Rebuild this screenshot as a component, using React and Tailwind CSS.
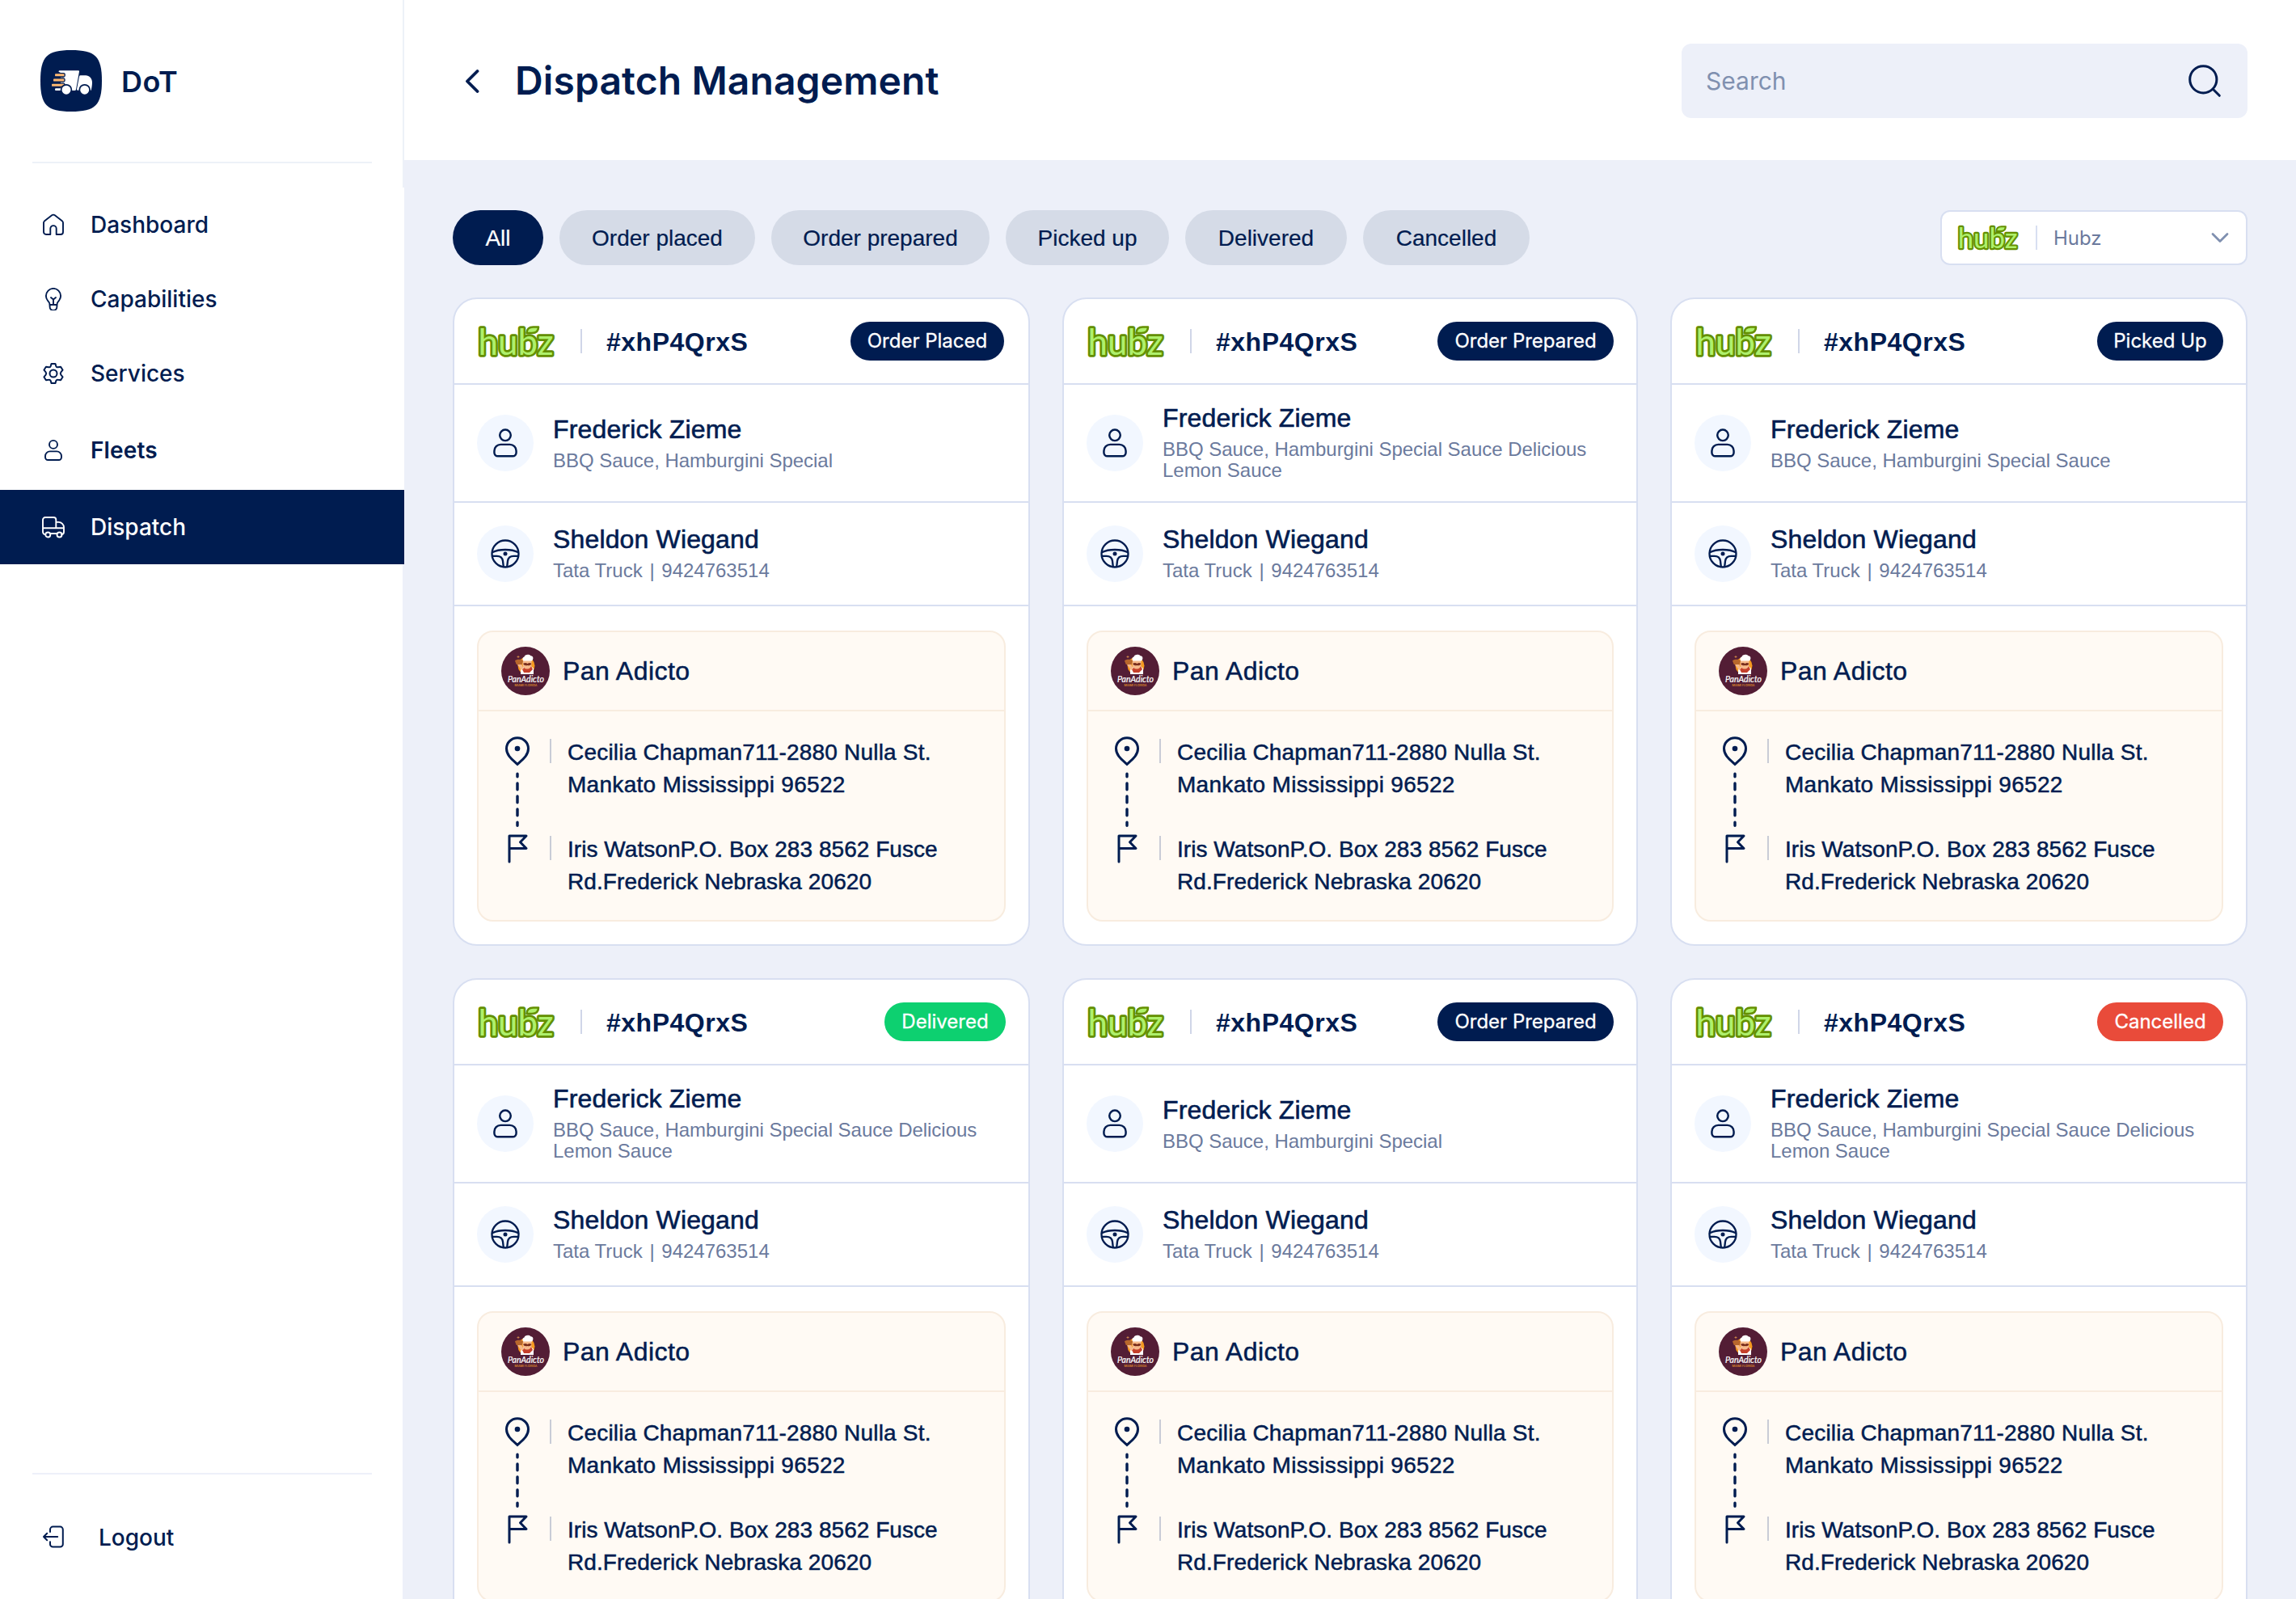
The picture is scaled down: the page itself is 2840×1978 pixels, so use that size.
import React from "react";

const STROKE = { fill: "none", stroke: "currentColor", strokeLinecap: "round", strokeLinejoin: "round" };

function HomeIcon() {
  return (
    <svg viewBox="0 0 28 28" className="size-7 shrink-0" {...STROKE} strokeWidth="1.9">
      <path d="M2 11.6a3 3 0 0 1 1.2-2.4l9-6.9a3 3 0 0 1 3.6 0l9 6.9a3 3 0 0 1 1.2 2.4V23a3 3 0 0 1-3 3h-5.3v-7.2a3.7 3.7 0 0 0-7.4 0V26H5a3 3 0 0 1-3-3Z" />
    </svg>
  );
}

function BulbIcon() {
  return (
    <svg viewBox="0 0 28 28" className="size-7 shrink-0" {...STROKE} strokeWidth="1.9">
      <path d="M9.600 21c0-2.400-1.300-4-2.900-5.700A9.300 9.300 0 0 1 4.900 10a9.100 9.100 0 0 1 18.200 0c0 2-.7 3.800-1.800 5.300-1.600 1.700-2.900 3.300-2.900 5.700v2.600a4.400 4.400 0 0 1-8.800 0Z" />
      <path d="M9.600 21h8.800M14 21v-6.800M11 12l3 2.400 3-2.400" />
    </svg>
  );
}

function GearIcon() {
  return (
    <svg viewBox="0 0 28 28" className="size-7 shrink-0" {...STROKE} strokeWidth="2">
      <circle cx="14" cy="14" r="4.500" />
      <path d="M11.600 1.900h4.800l1 3.200c.4.900 1.200 1.400 2.200 1.200l3.500-.6 2.500 4-2.200 2.600c-.7.900-.7 2.500 0 3.400l2.200 2.600-2.500 4-3.500-.6c-1-.2-1.800.3-2.200 1.200l-1 3.200h-4.800l-1-3.200c-.4-.9-1.200-1.400-2.200-1.200l-3.500.6-2.500-4 2.200-2.600c.7-.9.7-2.500 0-3.400L2.400 9.700l2.500-4 3.500.6c1 .2 1.800-.3 2.200-1.200Z" />
    </svg>
  );
}

function PersonIcon({ className, width }) {
  return (
    <svg viewBox="0 0 28 28" className={className} {...STROKE} strokeWidth={width}>
      <circle cx="14" cy="6.900" r="5" />
      <path d="M9.800 15.400h8.400a5.800 5.800 0 0 1 5.800 5.800v1.600a3.200 3.200 0 0 1-3.200 3.200H7.200A3.200 3.200 0 0 1 4 22.800v-1.600a5.800 5.800 0 0 1 5.800-5.800Z" />
    </svg>
  );
}

function TruckIcon() {
  return (
    <svg viewBox="0 0 28 28" className="size-7 shrink-0" {...STROKE} strokeWidth="1.900">
      <path d="M4 23.100a3 3 0 0 1-3-3V5a3 3 0 0 1 3-3h10.300a3 3 0 0 1 3 3v10.200H1M17.300 7.900h3.200c3.600 0 6.500 2.900 6.500 6.500v5.700a3 3 0 0 1-3 3M17.300 15.200H27M10.500 22h8" />
      <circle cx="7.300" cy="23.500" r="3" />
      <circle cx="21.500" cy="23.500" r="3" />
    </svg>
  );
}

function LogoutIcon() {
  return (
    <svg viewBox="0 0 28 28" className="size-7 shrink-0" {...STROKE} strokeWidth="2">
      <path d="M10 8V5a3.400 3.400 0 0 1 3.400-3.400h9A3.400 3.400 0 0 1 25.800 5v18.200a3.400 3.400 0 0 1-3.400 3.400h-9a3.400 3.400 0 0 1-3.400-3.400v-3M19.200 14H2M6.200 9.800 2 14l4.200 4.200" />
    </svg>
  );
}

function WheelIcon() {
  return (
    <svg viewBox="0 0 36 36" className="size-9" {...STROKE} strokeWidth="2.300">
      <circle cx="18" cy="18" r="16.500" />
      <circle cx="18" cy="18" r="2.500" fill="currentColor" stroke="none" />
      <path d="M2 16.300C7 13.700 12 13 18 13s11 .7 16 3.300" />
      <path d="M2 20.800h5.500c4.700 0 7 2 7.500 6.200l.8 7M34 20.800h-5.500c-4.700 0-7 2-7.500 6.200l-.8 7" />
    </svg>
  );
}

function BrandMark() {
  return (
    <svg viewBox="0 0 76 76" className="size-[76px] shrink-0">
      <path d="M0 38C0 8 8 0 38 0s38 8 38 38-8 38-38 38S0 68 0 38Z" fill="#001c50" />
      <path d="M23.500 25.300h23.500q1.200 0 1 1.200L44 48.700q-.3 1.300-1.500 1.300H25V28l-2.500-1.200q0-1.500 1-1.500Z" fill="#fff" />
      <path d="M49.500 31.300H56c4.500 0 8 4 8 8.500 0 3.500-.5 6.500-1.300 9.900H46q-1.200 0-1-1.400l3-15.600q.3-1.400 1.500-1.400Z" fill="#fff" />
      <path d="M19 47.300h7v2.700h-7q-1 0-1-1.350t1-1.350Z" fill="#fff" />
      <g fill="#ffb870" stroke="#001c50" strokeWidth="1.300">
        <rect x="17.400" y="28.600" width="12.800" height="4.400" rx="1.500" />
        <rect x="15.400" y="34.800" width="14.600" height="4.400" rx="1.500" />
        <rect x="13.400" y="41.100" width="16.600" height="4.400" rx="1.500" />
      </g>
      <g fill="#fff" stroke="#001c50" strokeWidth="1.800">
        <circle cx="32" cy="49.200" r="6.400" />
        <circle cx="54.700" cy="49.200" r="6.400" />
      </g>
    </svg>
  );
}

function HubzLogo({ className }) {
  const word = {
    x: 0.5,
    y: 35.600,
    fontFamily: "Lato, sans-serif",
    fontSize: 44,
    textLength: 93,
    lengthAdjust: "spacingAndGlyphs",
    strokeLinejoin: "round",
    strokeLinecap: "round",
  };
  return (
    <svg viewBox="0 0 95 39" className={"overflow-visible " + className}>
      <text {...word} fill="#648f00" stroke="#648f00" strokeWidth="5.500">hubz</text>
      <path d="M60.500 9c0-5 3-7.500 8-7.500H75c0 5-2.500 7.500-8 7.500Z" fill="#aef06c" stroke="#648f00" strokeWidth="2.600" strokeLinejoin="round" />
      <text {...word} fill="#aef06c">hubz</text>
    </svg>
  );
}

function PanAdictoLogo() {
  return (
    <svg viewBox="0 0 60 60" className="size-[60px] shrink-0">
      <circle cx="30" cy="30" r="30" fill="#531d35" />
      <circle cx="31" cy="23.500" r="10.500" fill="#f79a1f" />
      <path d="M24 34V27l5-3h8l3 3v7Z" fill="#fff" />
      <path d="M29 24h8l2 4-4 4h-7l-2-4Z" fill="#c5402b" />
      <path d="M26.500 16.500h11V22a5.500 5.500 0 0 1-11 0Z" fill="#f6b98b" />
      <path d="M27 21q3-2 5.500 0 2.500-2 5 0-1.500 3-5 2-4 1-5.500-2Z" fill="#7a2f1c" />
      <path d="M27.500 17.500c-2-2-1-4.500 1-5 .5-3 6-3.500 8-1.200 3-.3 4 3.700 1.500 6.200Z" fill="#fff" />
      <path d="M17 17.500c1-2.500 9-2.500 10 0l-1.200 4.500h-7Z" fill="#b8672c" />
      <path d="M20 22h5l3 5-3 2Z" fill="#f6b98b" />
      <path d="M21 14v-3M19.500 12.500h3" stroke="#d88d4a" strokeWidth="0.800" />
      <text x="8" y="44" fontFamily="Lato, sans-serif" fontStyle="italic" fontWeight="400" fontSize="10.500" textLength="45" lengthAdjust="spacingAndGlyphs" fill="#fff" stroke="#fff" strokeWidth="0.200">PanAdicto</text>
      <text x="16.500" y="49" fontFamily="Inter, sans-serif" fontWeight="600" fontSize="3.200" textLength="28" lengthAdjust="spacingAndGlyphs" fill="#d9862d">MIAMI FLORIDA</text>
    </svg>
  );
}

function RouteLine() {
  return (
    <svg viewBox="0 0 40 170" className="-mt-[5px] h-[170px] w-10 shrink-0" {...STROKE} strokeWidth="3">
      <path d="M20 40.500C15.500 36 6.500 30.500 6.500 21a13.500 13.300 0 0 1 27 0c0 9.500-9 15-13.500 19.500Z" strokeLinejoin="miter" />
      <circle cx="20" cy="21" r="3.300" fill="currentColor" stroke="none" />
      <path d="M20 52.200v3.500M20 64v7.800M20 80v7.800M20 96v7.800M20 112.200v4" strokeWidth="3.400" />
      <path d="M10 161V129h21l-7.500 7.800 7.500 7.700H10" />
    </svg>
  );
}

const NAV = [
  { label: "Dashboard", icon: <HomeIcon />, style: "h-[92px] font-medium" },
  { label: "Capabilities", icon: <BulbIcon />, style: "h-[92px] font-medium" },
  { label: "Services", icon: <GearIcon />, style: "h-[92px] font-medium" },
  { label: "Fleets", icon: <PersonIcon className="size-7 shrink-0" width="1.900" />, style: "h-[98px] font-semibold tracking-[0.15px]" },
  { label: "Dispatch", icon: <TruckIcon />, style: "h-[92px] bg-[#001c50] font-medium text-white" },
];

function Sidebar() {
  return (
    <aside className="flex h-[1978px] w-[500px] shrink-0 flex-col bg-[#edf0f9]">
      <div className="flex h-[232px] flex-col border-r-2 border-[#edf1f8] bg-white">
        <div className="mr-[38px] ml-10 flex h-[202px] items-center gap-6 border-b-2 border-[#edf1f8] pl-[10px]">
          <BrandMark />
          <span className="pt-0.5 text-[36px] leading-none font-semibold tracking-[0.4px]">DoT</span>
        </div>
      </div>
      <nav className="bg-white">
        {NAV.map((item) => (
          <a key={item.label} className={"flex items-center gap-8 pl-[52px] text-[28px] " + item.style}>
            {item.icon}
            {item.label}
          </a>
        ))}
      </nav>
      <div className="flex w-[498px] flex-1 flex-col justify-end bg-white">
        <div className="mr-[38px] ml-10 flex h-[156px] items-center gap-[42px] border-t-2 border-[#edf0f9] pl-3 text-[28px] font-medium">
          <LogoutIcon />
          <span className="pt-0.5">Logout</span>
        </div>
      </div>
    </aside>
  );
}

function Header() {
  return (
    <header className="flex h-[198px] items-center justify-between bg-white pt-0.5 pr-[60px] pl-[74px]">
      <div className="flex items-center">
        <svg viewBox="0 0 20 30" className="h-[30px] w-5" {...STROKE} strokeWidth="3.800">
          <path d="M16.500 3 4 15.500 16.500 28" />
        </svg>
        <h1 className="ml-[43px] text-[48px] leading-none font-semibold tracking-[0.1px]">Dispatch Management</h1>
      </div>
      <div className="flex h-[92px] w-[700px] items-center justify-between rounded-xl bg-[#edf0f9] pr-[32px] pl-[30px]">
        <span className="text-[30px] text-[#8090b0]">Search</span>
        <svg viewBox="0 0 42 42" className="size-[42px]" {...STROKE} strokeWidth="3">
          <circle cx="19.300" cy="19.300" r="16.600" />
          <path d="m31.300 31.300 8 8" />
        </svg>
      </div>
    </header>
  );
}

const TABS = [
  { label: "All", style: "w-[112px] bg-[#001c50] text-white" },
  { label: "Order placed", style: "w-[242px] bg-[#d5dbe7]" },
  { label: "Order prepared", style: "w-[270px] bg-[#d5dbe7]" },
  { label: "Picked up", style: "w-[202px] bg-[#d5dbe7]" },
  { label: "Delivered", style: "w-[200px] bg-[#d5dbe7]" },
  { label: "Cancelled", style: "w-[206px] bg-[#d5dbe7]" },
];

function Filters() {
  return (
    <div className="flex items-center justify-between">
      <div className="flex gap-5 font-['Liberation_Sans',sans-serif] text-[28px]">
        {TABS.map((tab) => (
          <button key={tab.label} className={"h-[68px] rounded-full pt-0.5 whitespace-nowrap [-webkit-text-stroke:0.2px] " + tab.style}>
            {tab.label}
          </button>
        ))}
      </div>
      <div className="flex h-[68px] w-[380px] items-center rounded-xl border-2 border-[#d8dff1] bg-white pr-[21px] pl-[19px]">
        <HubzLogo className="h-[31px] w-[76px]" />
        <div className="ml-[21px] h-[30px] w-0.5 bg-[#d8dff1]" />
        <span className="ml-5 flex-1 pt-0.5 text-[24px] text-[#6b7a9d]">Hubz</span>
        <svg viewBox="0 0 22 14" className="h-[14px] w-[22px]" {...STROKE} strokeWidth="2.800">
          <path d="m2 2.500 9 9 9-9" stroke="#8090b0" />
        </svg>
      </div>
    </div>
  );
}

function PersonRow({ icon, name, children, className, textStyle }) {
  return (
    <div className={"flex items-center border-b-2 border-[#d8dff1] pl-7 " + className}>
      <div className="flex size-[70px] shrink-0 items-center justify-center rounded-full bg-[#f2f7ff]">{icon}</div>
      <div className={"ml-6 " + textStyle}>
        <div className="text-[32px] leading-9 tracking-[0.15px] [-webkit-text-stroke:0.6px]">{name}</div>
        <div className="mt-2 text-[24px] leading-[26px] text-[#6b7a9d]">{children}</div>
      </div>
    </div>
  );
}

function OrderCard({ status, tone, items }) {
  return (
    <article className="h-[802px] overflow-hidden rounded-[30px] border-2 border-[#d8dff1] bg-white font-['Liberation_Sans',sans-serif]">
      <div className="flex h-[106px] items-center border-b-2 border-[#d8dff1] pr-7 pl-[29px]">
        <HubzLogo className="h-[39px] w-[95px]" />
        <div className="ml-8 h-[30px] w-0.5 bg-[#d0d6e8]" />
        <span className="ml-[30px] flex-1 pt-px text-[32px] font-bold tracking-[0.5px]">#xhP4QrxS</span>
        <span className={"flex h-12 items-center justify-center rounded-full font-['Inter',sans-serif] text-[24px] whitespace-nowrap text-white [-webkit-text-stroke:0.3px] " + tone}>
          {status}
        </span>
      </div>
      <PersonRow
        className="h-[146px]"
        textStyle={items.length > 1 ? "pb-0.5 tracking-[-0.03px]" : "tracking-[-0.03px]"}
        icon={<PersonIcon className="size-[38px]" width="1.800" />}
        name="Frederick Zieme"
      >
        {items.map((line) => (
          <div key={line} className="whitespace-nowrap">{line}</div>
        ))}
      </PersonRow>
      <PersonRow className="h-[128px]" textStyle="pb-0.5" icon={<WheelIcon />} name="Sheldon Wiegand">
        Tata Truck <span className="mr-0.5 ml-[2px]">|</span> 9424763514
      </PersonRow>
      <div className="mx-7 mt-[30px] h-[360px] rounded-[20px] border-2 border-[#f8ecdf] bg-[#fffaf4]">
        <div className="flex h-[98px] items-center gap-4 border-b-2 border-[#f8ecdf] pl-7">
          <PanAdictoLogo />
          <span className="text-[32px] tracking-[0.45px] [-webkit-text-stroke:0.5px]">Pan Adicto</span>
        </div>
        <div className="flex pt-[30px] pl-7 text-[28px] leading-10 whitespace-nowrap [-webkit-text-stroke:0.5px]">
          <RouteLine />
          <div className="flex flex-col gap-10">
            <div className="flex pl-5">
              <div className="mt-1 h-[30px] w-0.5 bg-[#c9ccd6]" />
              <p className="ml-5 pt-px">
                <span className="tracking-[0.2px]">Cecilia Chapman711-2880 Nulla St.</span>
                <br />
                <span className="tracking-[0.3px]">Mankato Mississippi 96522</span>
              </p>
            </div>
            <div className="-mt-px flex pl-5">
              <div className="mt-1 h-[30px] w-0.5 bg-[#c9ccd6]" />
              <p className="ml-5 pt-px">
                <span className="tracking-[0.05px]">Iris WatsonP.O. Box 283 8562 Fusce</span>
                <br />
                <span className="tracking-[0.1px]">Rd.Frederick Nebraska 20620</span>
              </p>
            </div>
          </div>
        </div>
      </div>
    </article>
  );
}

const SHORT = ["BBQ Sauce, Hamburgini Special"];
const MEDIUM = ["BBQ Sauce, Hamburgini Special Sauce"];
const LONG = ["BBQ Sauce, Hamburgini Special Sauce Delicious", "Lemon Sauce"];

const ORDERS = [
  { status: "Order Placed", tone: "mr-0.5 w-[190px] bg-[#001c50]", items: SHORT },
  { status: "Order Prepared", tone: "w-[218px] bg-[#001c50]", items: LONG },
  { status: "Picked Up", tone: "w-[156px] bg-[#001c50]", items: MEDIUM },
  { status: "Delivered", tone: "w-[150px] bg-[#0dd070]", items: LONG },
  { status: "Order Prepared", tone: "w-[218px] bg-[#001c50]", items: SHORT },
  { status: "Cancelled", tone: "w-[156px] bg-[#e94b3a]", items: LONG },
];

export default function App() {
  return (
    <div className="flex h-[1978px] w-[2840px] overflow-hidden bg-[#edf0f9] font-['Inter',sans-serif] text-[#001c50]">
      <Sidebar />
      <main className="flex-1">
        <Header />
        <section className="px-[60px] pt-[62px]">
          <Filters />
          <div className="mt-10 grid grid-cols-[714px_712px_714px] gap-10">
            {ORDERS.map((order, i) => (
              <OrderCard key={i} {...order} />
            ))}
          </div>
        </section>
      </main>
    </div>
  );
}
